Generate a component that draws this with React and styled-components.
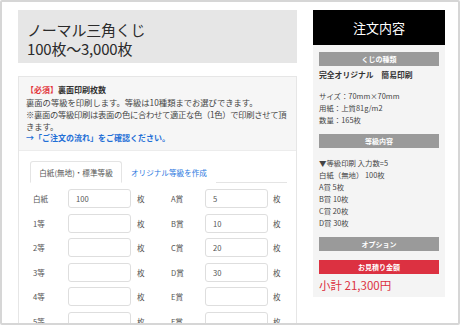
import React from 'react';
import styled, { createGlobalStyle } from 'styled-components';

const GlobalStyle = createGlobalStyle`
  html, body {
    margin: 0;
    padding: 0;
    background: #fff;
  }
  body {
    font-family: "Noto Sans CJK JP", "Noto Sans", sans-serif;
    color: #333;
  }
`;

const grades = [
    { left: '白紙', leftValue: '100', right: 'A賞', rightValue: '5' },
    { left: '1等', leftValue: '', right: 'B賞', rightValue: '10' },
    { left: '2等', leftValue: '', right: 'C賞', rightValue: '20' },
    { left: '3等', leftValue: '', right: 'D賞', rightValue: '30' },
    { left: '4等', leftValue: '', right: 'E賞', rightValue: '' },
    { left: '5等', leftValue: '', right: 'F賞', rightValue: '' },
];

const summaryGrades = ['白紙（無地） 100枚', 'A賞 5枚', 'B賞 10枚', 'C賞 20枚', 'D賞 30枚'];

// the notice wraps after 頂 in the original layout
const noticeLines = [
    '裏面の等級を印刷します。等級は10種類までお選びできます。',
    '※裏面の等級印刷は表面の色に合わせて適正な色（1色）で印刷させて頂',
    'きます。',
];

const App = () => {
    return (
        <>
            <GlobalStyle />
            <Frame>
                <MainColumn>
                    <TitleBox>
                        <Title>ノーマル三角くじ</Title>
                        <Title>100枚〜3,000枚</Title>
                    </TitleBox>

                    <Card>
                        <InfoSection>
                            <InfoHeading>
                                <Required>【必須】</Required>裏面印刷枚数
                            </InfoHeading>
                            {noticeLines.map((t, i) => (
                                <InfoText key={i} condensed={i === 1}>{t}</InfoText>
                            ))}
                            <InfoLink>→「ご注文の流れ」をご確認ください。</InfoLink>
                        </InfoSection>

                        <FormSection>
                            <Tabs>
                                <Tab active>白紙(無地)・標準等級</Tab>
                                <Tab>オリジナル等級を作成</Tab>
                            </Tabs>
                            <GradeGrid>
                                {grades.map((g) => (
                                    <React.Fragment key={g.left}>
                                        <GradeLabel>{g.left}</GradeLabel>
                                        <CountInput defaultValue={g.leftValue} />
                                        <Unit>枚</Unit>
                                        <GradeLabel>{g.right}</GradeLabel>
                                        <CountInput defaultValue={g.rightValue} />
                                        <Unit narrow>枚</Unit>
                                    </React.Fragment>
                                ))}
                            </GradeGrid>
                        </FormSection>
                    </Card>
                </MainColumn>

                <SideColumn>
                    <OrderHeader>注文内容</OrderHeader>
                    <OrderPanel>
                        <SectionBar>くじの種類</SectionBar>
                        <StrongLine>完全オリジナル　簡易印刷</StrongLine>
                        <Block>
                            <Line>サイズ：70mm×70mm</Line>
                            <Line>用紙：上質81g/m2</Line>
                            <Line>数量：165枚</Line>
                        </Block>
                        <SectionBar>等級内容</SectionBar>
                        <Block>
                            <Line>▼等級印刷 入力数=5</Line>
                            {summaryGrades.map((s) => (
                                <Line key={s}>{s}</Line>
                            ))}
                        </Block>
                        <SectionBar>オプション</SectionBar>
                        <SectionBar red>お見積り金額</SectionBar>
                        <Total>小計 21,300円</Total>
                    </OrderPanel>
                </SideColumn>
            </Frame>
        </>
    );
};

const Frame = styled.div`
  box-sizing: border-box;
  width: 460px;
  height: 325px;
  border: 2px solid #d6d6d6;
  border-radius: 2px;
  padding: 8px 14px 0 16px;
  display: flex;
  align-items: flex-start;
  gap: 16px;
  overflow: hidden;
`;

const MainColumn = styled.div`
  width: 279px;
  flex: none;
  display: flex;
  flex-direction: column;
  gap: 13px;
`;

const TitleBox = styled.div`
  flex: none;
  background: #e6e6e6;
  height: 53px;
  box-sizing: border-box;
  padding: 10px 9px 0;
`;

const Title = styled.div`
  font-size: 15px;
  line-height: 19px;
  color: #2b2b2b;
  letter-spacing: -0.2px;
`;

const Card = styled.div`
  flex: none;
  border: 1px solid #e6e6e6;
  border-bottom: none;
`;

const InfoSection = styled.div`
  background: #f6f6f6;
  padding: 7px 4px 6px 7px;
  border-bottom: 1px solid #ececec;
  overflow: hidden;
`;

const InfoHeading = styled.div`
  font-size: 8px;
  line-height: 12px;
  font-weight: bold;
  color: #333;
`;

const Required = styled.span`
  color: #e2343b;
`;

const InfoText = styled.div`
  font-size: 8.3px;
  line-height: 12px;
  color: #444;
  white-space: nowrap;
  letter-spacing: ${(p) => (p.condensed ? '-0.3px' : '0')};
`;

const InfoLink = styled.div`
  font-size: 8px;
  line-height: 12px;
  font-weight: bold;
  color: #1f6fd6;
`;

const FormSection = styled.div`
  background: #fff;
  padding: 10px 9px 0 11px;
`;

const Tabs = styled.div`
  display: flex;
  border-bottom: 1px solid #e4e4e4;
  height: 21px;
`;

const Tab = styled.div`
  box-sizing: border-box;
  height: 22px;
  padding: 0 8px;
  width: ${(p) => (p.active ? '92px' : 'auto')};
  display: flex;
  align-items: center;
  justify-content: center;
  font-size: 7.6px;
  color: ${(p) => (p.active ? '#555' : '#2a78e0')};
  border: 1px solid ${(p) => (p.active ? '#e4e4e4' : 'transparent')};
  border-bottom-color: ${(p) => (p.active ? '#fff' : 'transparent')};
  border-radius: 3px 3px 0 0;
  background: #fff;
`;

const GradeGrid = styled.div`
  display: grid;
  grid-template-columns: 38px 63px 37px 37px 63px auto;
  grid-auto-rows: 19px;
  row-gap: 5.5px;
  align-items: center;
  margin-top: 6px;
`;

const GradeLabel = styled.div`
  padding-left: 3px;
  font-size: 7.6px;
  color: #555;
`;

const CountInput = styled.input`
  box-sizing: border-box;
  width: 63px;
  height: 19px;
  border: 1px solid #dedede;
  border-radius: 3px;
  padding: 0 7px;
  font-family: inherit;
  font-size: 7.6px;
  color: #555;
  background: #fff;
  outline: none;
`;

const Unit = styled.div`
  padding-left: ${(p) => (p.narrow ? '5px' : '6px')};
  font-size: 7.6px;
  color: #555;
`;

const SideColumn = styled.div`
  width: 132px;
  flex: none;
  display: flex;
  flex-direction: column;
`;

const OrderHeader = styled.div`
  height: 35px;
  background: #000;
  color: #fff;
  font-size: 13px;
  display: flex;
  align-items: center;
  justify-content: center;
`;

const OrderPanel = styled.div`
  background: #f4f4f4;
  height: 252px;
  box-sizing: border-box;
  padding: 7px 6px 0;
  display: flex;
  flex-direction: column;
`;

const SectionBar = styled.div`
  height: 14px;
  background: ${(p) => (p.red ? '#dc3141' : '#9a9a9a')};
  color: #fff;
  font-size: 7px;
  font-weight: bold;
  display: flex;
  align-items: center;
  justify-content: center;
  margin-bottom: ${(p) => (p.red ? '3px' : '9px')};
`;

const StrongLine = styled.div`
  margin-top: -6px;
  font-size: 7.8px;
  line-height: 12px;
  font-weight: bold;
  color: #333;
`;

const Block = styled.div`
  margin: 9px 0 8px;

  ${SectionBar} + & {
    margin-top: 0;
  }
`;

const Line = styled.div`
  font-size: 7.4px;
  line-height: 12px;
  color: #444;
`;

const Total = styled.div`
  font-size: 11.5px;
  line-height: 16px;
  color: #dc3141;
`;

export default App;
